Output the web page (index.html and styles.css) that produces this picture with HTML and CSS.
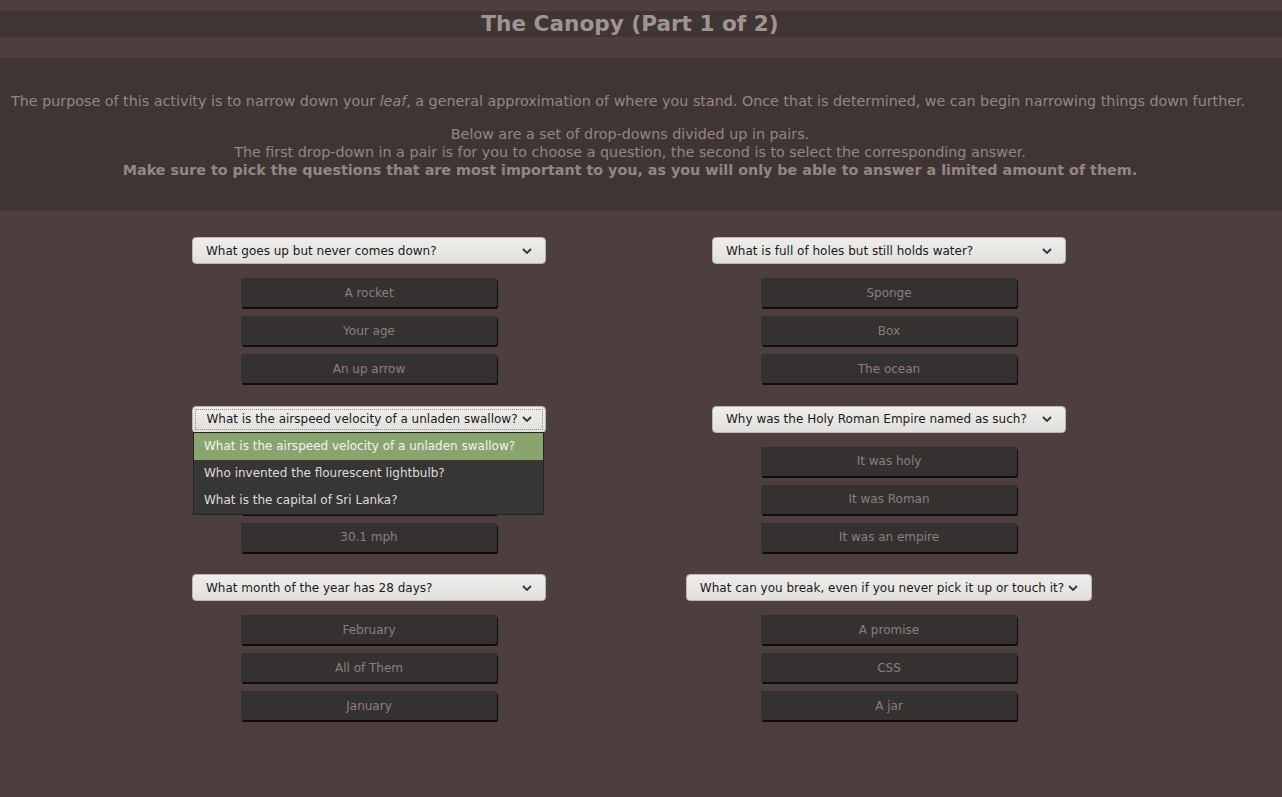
FILE: index.html
```html
<!DOCTYPE html>
<html lang="en">
<head>
<meta charset="utf-8">
<title>The Canopy</title>
<link rel="stylesheet" href="styles.css">
</head>
<body>
<header class="header">
  <div class="title-band"><h1 class="title">The Canopy (Part 1 of 2)</h1></div>
</header>
<section class="intro">
  <p class="lead">The purpose of this activity is to narrow down your <em>leaf</em>, a general approximation of where you stand. Once that is determined, we can begin narrowing things down further.</p>
  <p class="notes">Below are a set of drop-downs divided up in pairs.<br>The first drop-down in a pair is for you to choose a question, the second is to select the corresponding answer.<br><strong>Make sure to pick the questions that are most important to you, as you will only be able to answer a limited amount of them.</strong></p>
</section>
<main class="pairs">
  <div class="pair">
    <div class="select"><span>What goes up but never comes down?</span><svg class="chev" viewBox="0 0 10 6" width="10" height="6"><path d="M1 1 L5 5 L9 1" fill="none" stroke="#333" stroke-width="1.8"/></svg></div>
    <div class="answer">A rocket</div>
    <div class="answer">Your age</div>
    <div class="answer">An up arrow</div>
  </div>
  <div class="pair">
    <div class="select"><span>What is full of holes but still holds water?</span><svg class="chev" viewBox="0 0 10 6" width="10" height="6"><path d="M1 1 L5 5 L9 1" fill="none" stroke="#333" stroke-width="1.8"/></svg></div>
    <div class="answer">Sponge</div>
    <div class="answer">Box</div>
    <div class="answer">The ocean</div>
  </div>
  <div class="pair">
    <div class="select focused"><span>What is the airspeed velocity of a unladen swallow?</span><svg class="chev" viewBox="0 0 10 6" width="10" height="6"><path d="M1 1 L5 5 L9 1" fill="none" stroke="#333" stroke-width="1.8"/></svg></div>
    <ul class="menu">
      <li class="menu-item active">What is the airspeed velocity of a unladen swallow?</li>
      <li class="menu-item">Who invented the flourescent lightbulb?</li>
      <li class="menu-item">What is the capital of Sri Lanka?</li>
    </ul>
    <div class="answer">24 mph</div>
    <div class="answer">11 m/s</div>
    <div class="answer">30.1 mph</div>
  </div>
  <div class="pair">
    <div class="select"><span>Why was the Holy Roman Empire named as such?</span><svg class="chev" viewBox="0 0 10 6" width="10" height="6"><path d="M1 1 L5 5 L9 1" fill="none" stroke="#333" stroke-width="1.8"/></svg></div>
    <div class="answer">It was holy</div>
    <div class="answer">It was Roman</div>
    <div class="answer">It was an empire</div>
  </div>
  <div class="pair">
    <div class="select"><span>What month of the year has 28 days?</span><svg class="chev" viewBox="0 0 10 6" width="10" height="6"><path d="M1 1 L5 5 L9 1" fill="none" stroke="#333" stroke-width="1.8"/></svg></div>
    <div class="answer">February</div>
    <div class="answer">All of Them</div>
    <div class="answer">January</div>
  </div>
  <div class="pair">
    <div class="select"><span>What can you break, even if you never pick it up or touch it?</span><svg class="chev" viewBox="0 0 10 6" width="10" height="6"><path d="M1 1 L5 5 L9 1" fill="none" stroke="#333" stroke-width="1.8"/></svg></div>
    <div class="answer">A promise</div>
    <div class="answer">CSS</div>
    <div class="answer">A jar</div>
  </div>
</main>
</body>
</html>
```

FILE: styles.css
```css
html, body {
  margin: 0;
  padding: 0;
}
body {
  background: #4d3f3f;
  font-family: "DejaVu Sans", "Liberation Sans", sans-serif;
  min-height: 797px;
}
.header {
  padding: 11px 0 21px;
}
.title-band {
  background: #403535;
  height: 26px;
  display: flex;
  align-items: center;
  justify-content: center;
  padding-right: 22px;
}
.title {
  margin: 0;
  font-size: 21.6px;
  line-height: 26px;
  font-weight: bold;
  color: #a19393;
}
.intro {
  background: #403535;
  padding: 34px 11px 32px;
  color: #958686;
  font-size: 14.3px;
  line-height: 18px;
}
.lead {
  margin: 0 0 15px;
  white-space: nowrap;
}
.notes {
  margin: 0;
  padding-right: 22px;
  text-align: center;
}
.notes strong {
  font-weight: bold;
}
.pairs {
  display: grid;
  grid-template-columns: 520px 520px;
  row-gap: 22.5px;
  margin-left: 109px;
  padding-top: 26px;
}
.pair {
  position: relative;
  display: flex;
  flex-direction: column;
  align-items: center;
}
.select {
  box-sizing: border-box;
  min-width: 354px;
  height: 27px;
  display: flex;
  align-items: center;
  justify-content: space-between;
  gap: 4px;
  padding: 0 13px 0 13px;
  background: linear-gradient(#eeedeb, #e2e0dd);
  border: 1px solid #bcb7b2;
  border-radius: 4px;
  color: #1a1a1a;
  font-size: 12px;
  margin-bottom: 14px;
}
.select span {
  white-space: nowrap;
}
.chev {
  flex: none;
}
.select.focused {
  min-width: 351px;
  outline: 1px dotted #8a8a8a;
  outline-offset: -4px;
}
.answer {
  box-sizing: border-box;
  width: 256px;
  height: 29px;
  display: flex;
  align-items: center;
  justify-content: center;
  background: #353131;
  color: #8c7e7e;
  font-size: 12px;
  border-radius: 2px;
  box-shadow: 1px 2px 0 #0f0d0d;
  margin-bottom: 9px;
}
.answer:last-child {
  margin-bottom: 0;
}
.menu {
  position: absolute;
  top: 26px;
  left: 84px;
  width: 349px;
  margin: 0;
  padding: 0;
  list-style: none;
  background: #383535;
  border: 1px solid #262222;
  z-index: 2;
}
.menu-item {
  height: 27px;
  line-height: 27px;
  padding: 0 10px;
  font-size: 12px;
  color: #dcdcdc;
  white-space: nowrap;
}
.menu-item.active {
  background: #8aa470;
  color: #f2f2f2;
}
```
